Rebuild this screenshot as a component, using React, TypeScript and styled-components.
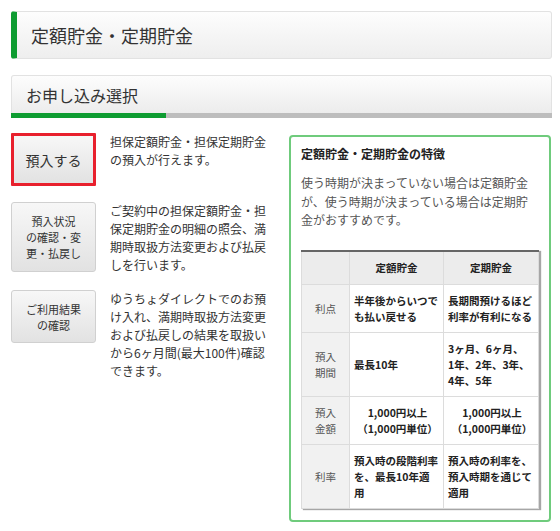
import React from "react";
import styled, { createGlobalStyle, css } from "styled-components";

const GlobalStyle = createGlobalStyle`
  html, body {
    margin: 0;
    padding: 0;
    background: #fff;
  }
  body {
    font-family: "Noto Sans CJK JP", "Noto Sans", sans-serif;
    color: #333;
  }
`;

const GREEN = "#0e9c31";

const Page = styled.div`
  width: 541px;
  padding: 11px 8px 0 11px;
`;

const PageTitle = styled.h1`
  margin: 0 0 16px;
  height: 48px;
  box-sizing: border-box;
  display: flex;
  align-items: center;
  padding-left: 14px;
  font-size: 18px;
  font-weight: normal;
  color: #333;
  background: linear-gradient(#fdfdfd, #eeeeee);
  border: 1px solid #e2e2e2;
  border-left: 6px solid ${GREEN};
  border-radius: 3px;
`;

const Section = styled.div`
  margin-bottom: 15px;
`;

const SectionTitle = styled.h2`
  margin: 0;
  height: 38px;
  box-sizing: border-box;
  display: flex;
  align-items: center;
  padding-left: 14px;
  font-size: 16px;
  font-weight: normal;
  color: #333;
  background: linear-gradient(#fdfdfd, #ececec);
  border: 1px solid #e2e2e2;
  border-bottom: none;
  border-radius: 3px 3px 0 0;
`;

const StepBar = styled.div<{ $done: number }>`
  height: 5px;
  background: linear-gradient(
    to right,
    ${GREEN} ${({ $done }) => $done}px,
    #bdbdbd ${({ $done }) => $done}px
  );
`;

const Content = styled.div`
  display: grid;
  grid-template-columns: 269px 262px;
  column-gap: 9px;
  align-items: start;
`;

const MenuList = styled.div`
  display: flex;
  flex-direction: column;
  gap: 16px;
`;

const MenuItem = styled.div`
  display: flex;
  align-items: flex-start;
  gap: 14px;
`;

const MenuButton = styled.button<{ $active?: boolean; $h: number }>`
  flex: none;
  width: 85px;
  height: ${({ $h }) => $h}px;
  box-sizing: border-box;
  padding: 0 4px;
  font-family: inherit;
  font-size: 11px;
  line-height: 16px;
  color: #333;
  background: linear-gradient(#f7f7f7, #e2e2e2);
  border: 1px solid #d0d0d0;
  border-radius: 3px;
  cursor: pointer;
  ${({ $active }) =>
    $active &&
    css`
      font-size: 14px;
      border: 3px solid #e8202d;
      border-radius: 1px;
    `}
`;

const MenuText = styled.p`
  margin: 0;
  width: 160px;
  font-size: 12px;
  line-height: 18px;
  color: #333;
`;

const FeatureBox = styled.div`
  margin-top: 2px;
  border: 2px solid #6fcb7c;
  border-radius: 4px;
  padding: 8px 11px 11px 10px;
`;

const FeatureTitle = styled.h3`
  margin: 0 0 11px;
  font-size: 12px;
  line-height: 18px;
  font-weight: bold;
  color: #222;
`;

const FeatureText = styled.p`
  margin: 0 0 20px;
  font-size: 12px;
  line-height: 18.5px;
  color: #555;
`;

const Table = styled.table`
  width: 237px;
  border-collapse: collapse;
  table-layout: fixed;
  border-top: 2px solid #666;
  box-shadow: 2px 1px 1px rgba(0, 0, 0, 0.35);
  font-size: 10.5px;
  line-height: 16px;
  white-space: nowrap;
`;

const HeadCell = styled.th`
  padding: 8px 3px;
  font-weight: bold;
  color: #222;
  background: #ececec;
  border: 1px solid #dcdcdc;
  border-top: none;
`;

const RowLabel = styled.th`
  padding: 8px 2px 7px;
  font-weight: normal;
  color: #555;
  background: #f1f1f1;
  border: 1px solid #dcdcdc;
`;

const Cell = styled.td<{ $center?: boolean }>`
  padding: 8px 2px 7px 4px;
  font-weight: bold;
  color: #222;
  background: #fff;
  border: 1px solid #dcdcdc;
  text-align: ${({ $center }) => ($center ? "center" : "left")};
`;

const menus = [
  {
    label: ["預入する"],
    h: 53,
    active: true,
    text: ["担保定額貯金・担保定期貯金", "の預入が行えます。"],
  },
  {
    label: ["預入状況", "の確認・変", "更・払戻し"],
    h: 70,
    text: [
      "ご契約中の担保定額貯金・担",
      "保定期貯金の明細の照会、満",
      "期時取扱方法変更および払戻",
      "しを行います。",
    ],
  },
  {
    label: ["ご利用結果", "の確認"],
    h: 53,
    text: [
      "ゆうちょダイレクトでのお預",
      "け入れ、満期時取扱方法変更",
      "および払戻しの結果を取扱い",
      "から6ヶ月間(最大100件)確認",
      "できます。",
    ],
  },
];

const rows = [
  { label: ["利点"], a: ["半年後からいつで", "も払い戻せる"], b: ["長期間預けるほど", "利率が有利になる"] },
  { label: ["預入", "期間"], a: ["最長10年"], b: ["3ヶ月、6ヶ月、", "1年、2年、3年、", "4年、5年"] },
  {
    label: ["預入", "金額"],
    a: ["1,000円以上", "（1,000円単位）"],
    b: ["1,000円以上", "（1,000円単位）"],
    center: true,
  },
  { label: ["利率"], a: ["預入時の段階利率", "を、最長10年適", "用"], b: ["預入時の利率を、", "預入時期を通じて", "適用"] },
];

const Lines: React.FC<{ lines: string[] }> = ({ lines }) => (
  <>
    {lines.map((l, i) => (
      <React.Fragment key={i}>
        {i > 0 && <br />}
        {l}
      </React.Fragment>
    ))}
  </>
);

const App: React.FC = () => {
  return (
    <Page>
      <GlobalStyle />
      <PageTitle>定額貯金・定期貯金</PageTitle>
      <Section>
        <SectionTitle>お申し込み選択</SectionTitle>
        <StepBar $done={155} />
      </Section>
      <Content>
        <MenuList>
          {menus.map((m, i) => (
            <MenuItem key={i}>
              <MenuButton $active={m.active} $h={m.h}>
                <Lines lines={m.label} />
              </MenuButton>
              <MenuText>
                <Lines lines={m.text} />
              </MenuText>
            </MenuItem>
          ))}
        </MenuList>
        <FeatureBox>
          <FeatureTitle>定額貯金・定期貯金の特徴</FeatureTitle>
          <FeatureText>
            使う時期が決まっていない場合は定額貯金が、使う時期が決まっている場合は定期貯金がおすすめです。
          </FeatureText>
          <Table>
            <colgroup>
              <col style={{ width: 48 }} />
              <col style={{ width: 94 }} />
              <col style={{ width: 95 }} />
            </colgroup>
            <thead>
              <tr>
                <HeadCell />
                <HeadCell>定額貯金</HeadCell>
                <HeadCell>定期貯金</HeadCell>
              </tr>
            </thead>
            <tbody>
              {rows.map((r, i) => (
                <tr key={i}>
                  <RowLabel>
                    <Lines lines={r.label} />
                  </RowLabel>
                  <Cell $center={r.center}>
                    <Lines lines={r.a} />
                  </Cell>
                  <Cell $center={r.center}>
                    <Lines lines={r.b} />
                  </Cell>
                </tr>
              ))}
            </tbody>
          </Table>
        </FeatureBox>
      </Content>
    </Page>
  );
};

export default App;
